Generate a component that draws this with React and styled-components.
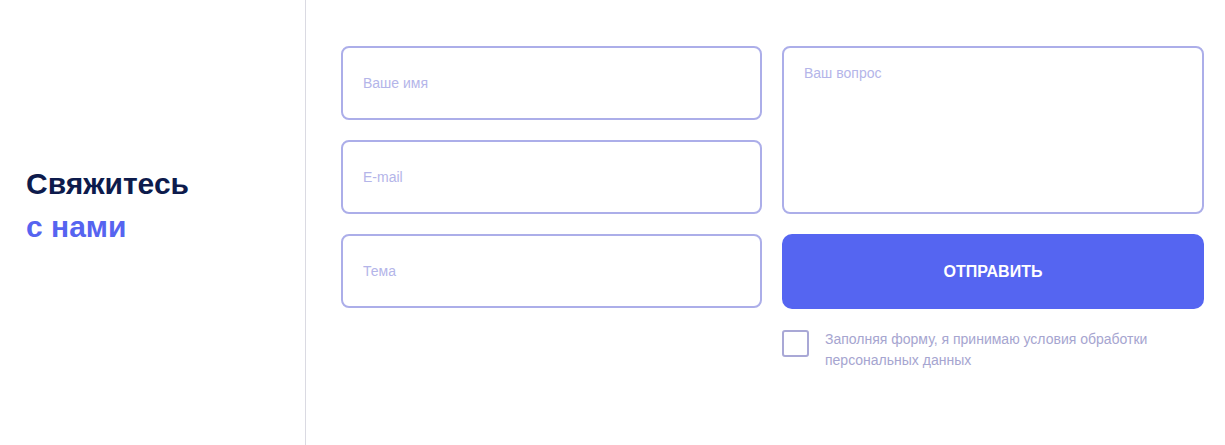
import React from "react";
import styled, { createGlobalStyle } from "styled-components";

const GlobalStyle = createGlobalStyle`
  html, body {
    margin: 0;
    padding: 0;
    background: #ffffff;
  }
  body {
    font-family: "Liberation Sans", Arial, sans-serif;
  }
  #root {
    height: 445px;
  }
  * {
    box-sizing: border-box;
  }
`;

function App() {
  return (
    <>
      <GlobalStyle />
      <Page>
        <Aside>
          <Title>
            Свяжитесь
            <Accent>с нами</Accent>
          </Title>
        </Aside>
        <Main>
          <Form onSubmit={(e) => e.preventDefault()}>
            <Fields>
              <Field type="text" placeholder="Ваше имя" />
              <Field type="email" placeholder="E-mail" />
              <Field type="text" placeholder="Тема" />
            </Fields>
            <Side>
              <Question placeholder="Ваш вопрос" />
              <Submit type="submit">Отправить</Submit>
              <Agree>
                <Check type="checkbox" />
                <AgreeText>
                  Заполняя форму, я принимаю условия обработки персональных данных
                </AgreeText>
              </Agree>
            </Side>
          </Form>
        </Main>
      </Page>
    </>
  );
}

export default App;

const Page = styled.div`
  display: flex;
  height: 445px;
`;

const Aside = styled.aside`
  width: 306px;
  flex-shrink: 0;
  border-right: 1px solid #dadae2;
  padding: 162px 0 0 26px;
`;

const Title = styled.h2`
  margin: 0;
  font-size: 30px;
  line-height: 43px;
  font-weight: 700;
  color: #0d1b4c;
`;

const Accent = styled.span`
  display: block;
  color: #5664f0;
`;

const Main = styled.main`
  flex: 1;
  padding: 46px 21px 0 35px;
`;

const Form = styled.form`
  display: grid;
  grid-template-columns: 421px 422px;
  column-gap: 20px;
`;

const Fields = styled.div`
  display: flex;
  flex-direction: column;
  gap: 20px;
`;

const Side = styled.div`
  display: flex;
  flex-direction: column;
`;

const inputBase = `
  width: 100%;
  border: 2px solid #acaee9;
  border-radius: 8px;
  background: #ffffff;
  font-family: "Liberation Sans", Arial, sans-serif;
  font-size: 14px;
  color: #0d1b4c;
  outline: none;
  &::placeholder {
    color: #b4b5e9;
  }
`;

const Field = styled.input`
  ${inputBase}
  height: 74px;
  padding: 0 20px;
`;

const Question = styled.textarea`
  ${inputBase}
  height: 168px;
  padding: 17px 20px;
  resize: none;
`;

const Submit = styled.button`
  margin-top: 20px;
  height: 75px;
  border: none;
  border-radius: 10px;
  background: #5565f1;
  color: #ffffff;
  font-family: "Liberation Sans", Arial, sans-serif;
  font-size: 16px;
  font-weight: 700;
  text-transform: uppercase;
  cursor: pointer;
`;

const Agree = styled.label`
  display: flex;
  align-items: flex-start;
  gap: 16px;
  margin-top: 20px;
`;

const Check = styled.input`
  appearance: none;
  margin: 1px 0 0;
  width: 27px;
  height: 27px;
  flex-shrink: 0;
  border: 2px solid #a9a8d6;
  border-radius: 3px;
  background: #ffffff;
`;

const AgreeText = styled.span`
  max-width: 340px;
  font-size: 14px;
  line-height: 21px;
  color: #a6a5d0;
`;
